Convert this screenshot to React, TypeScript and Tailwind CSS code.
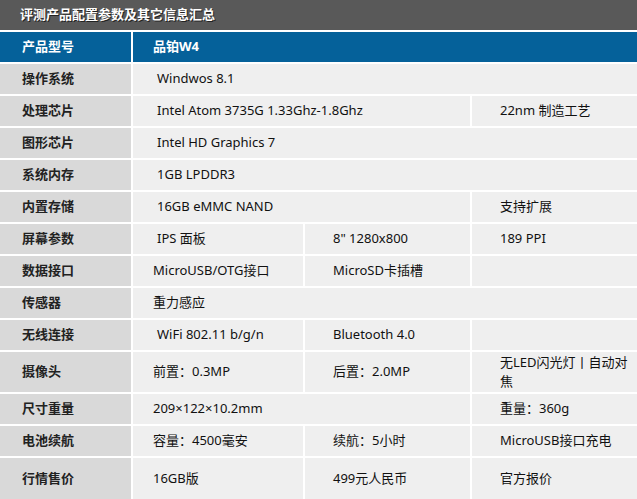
const rows: { label: string; cells: (string | [string, number])[]; h?: number; ind?: number }[] = [
  { label: '操作系统', cells: [['Windwos 8.1', 3]] },
  { label: '处理芯片', cells: [['Intel Atom 3735G 1.33Ghz-1.8Ghz', 2], '22nm 制造工艺'] },
  { label: '图形芯片', cells: [['Intel HD Graphics 7', 3]] },
  { label: '系统内存', cells: [['1GB LPDDR3', 3]] },
  { label: '内置存储', cells: [['16GB eMMC NAND', 2], '支持扩展'] },
  { label: '屏幕参数', cells: ['IPS 面板', '8" 1280x800', '189 PPI'] },
  { label: '数据接口', cells: ['MicroUSB/OTG接口', 'MicroSD卡插槽', ''], ind: 20 },
  { label: '传感器', cells: [['重力感应', 3]], ind: 20 },
  { label: '无线连接', cells: ['WiFi 802.11 b/g/n', 'Bluetooth 4.0', ''] },
  { label: '摄像头', cells: ['前置：0.3MP', '后置：2.0MP', '无LED闪光灯丨自动对焦'], h: 40, ind: 20 },
  { label: '尺寸重量', cells: [['209×122×10.2mm', 2], '重量：360g'], ind: 20 },
  { label: '电池续航', cells: ['容量：4500毫安', '续航：5小时', 'MicroUSB接口充电'], ind: 20 },
  { label: '行情售价', cells: ['16GB版', '499元人民币', '官方报价'], h: 41, ind: 20 },
]

const widths = [170, 165, 165]

export default function App() {
  return (
    <div
      className="w-[637px] h-[499px] overflow-hidden bg-white flex flex-col gap-[2px] text-[13px] text-[#111]"
      style={{ fontFamily: '"Noto Sans", "Noto Sans CJK SC", sans-serif' }}
    >
      <div className="h-[30px] bg-[#595959] flex items-center pl-[20px] text-white font-bold text-[13px] [text-shadow:1px_1px_0_#222]">
        评测产品配置参数及其它信息汇总
      </div>
      <div className="flex gap-[2px] h-[30px] text-white font-bold">
        <div className="w-[131px] bg-[#05619a] flex items-center pl-[22px]">产品型号</div>
        <div className="flex-1 bg-[#05619a] flex items-center pl-[20px]">品铂W4</div>
      </div>
      {rows.map((r) => {
        let col = 0
        return (
          <div key={r.label} className="flex gap-[2px]" style={{ height: r.h ?? 30 }}>
            <div className="w-[131px] shrink-0 bg-[#d9d9d9] flex items-center pl-[22px] font-bold text-[#222]">
              {r.label}
            </div>
            {r.cells.map((c, i) => {
              const [text, span] = typeof c === 'string' ? [c, 1] : c
              let w = 0
              for (let k = 0; k < span; k++) w += widths[col + k]
              w += (span - 1) * 2
              const first = col === 0
              const last = col + span === 3
              col += span
              return (
                <div
                  key={i}
                  className={`bg-[#efefef] flex items-center ${last ? 'flex-1' : 'shrink-0'}`}
                  style={{ width: last ? undefined : w, paddingLeft: first ? (r.ind ?? 24) : 28 }}
                >
                  {text}
                </div>
              )
            })}
          </div>
        )
      })}
    </div>
  )
}
